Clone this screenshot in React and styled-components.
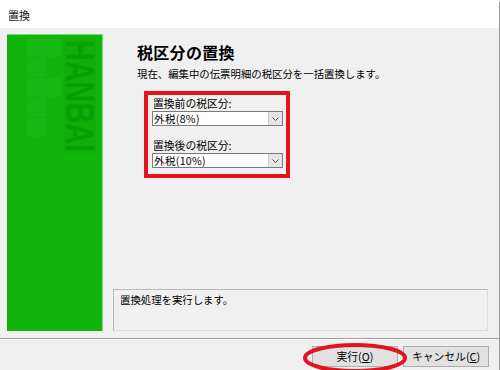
import * as React from "react";
import styled, { createGlobalStyle } from "styled-components";

const GlobalStyle = createGlobalStyle`
  html, body {
    margin: 0;
    padding: 0;
    background: #ffffff;
  }
  body {
    font-family: "Noto Sans CJK JP", "Noto Sans", sans-serif;
    color: #000;
  }
`;

const Window = styled.div`
  position: relative;
  width: 499px;
  height: 368px;
  margin-top: 2px;
  border-right: 1px solid #9a9a9a;
  border-bottom: 1px solid #9a9a9a;
  background: #f0f0f0;
  display: flex;
  flex-direction: column;
  box-sizing: content-box;
`;

const TitleBar = styled.div`
  height: 26px;
  background: #ffffff;
  display: flex;
  align-items: center;
  padding-left: 8px;
  font-size: 11px;
  color: #111;
`;

const Body = styled.div`
  display: flex;
  padding: 6px 11px 0 7px;
  gap: 10px;
  height: 298px;
`;

const SidePanel = styled.div`
  width: 96px;
  height: 297px;
  background: #10b40a;
  border-top: 1px solid #7ad97a;
  border-right: 1px solid #7ad97a;
  box-sizing: border-box;
  padding: 3px 0 0 20px;
  display: flex;
  align-items: flex-start;
  gap: 3px;
`;

const Blocks = styled.div`
  display: flex;
  flex-direction: column;
  gap: 1px;
  width: 34px;
`;

const Block = styled.div`
  width: ${(p) => (p.$wide ? 34 : 20)}px;
  height: 19px;
  border-radius: 2px;
  background: #18b814;
`;

const Wordmark = styled.div`
  width: 32px;
  height: 115px;
  background: #0daf08;
  display: flex;
  justify-content: center;
`;

const WordmarkText = styled.span`
  display: block;
  writing-mode: vertical-rl;
  font-family: "Liberation Sans", Arial, sans-serif;
  font-weight: bold;
  font-size: 40px;
  line-height: 30px;
  color: #07a004;
  transform: scaleY(0.72);
  transform-origin: top;
  margin-top: 2px;
`;

const Content = styled.div`
  flex: 1;
  display: flex;
  flex-direction: column;
`;

const Heading = styled.h1`
  margin: 7px 0 0 24px;
  font-size: 16px;
  font-weight: bold;
  letter-spacing: 0.3px;
  line-height: 22px;
`;

const Lead = styled.p`
  margin: 4px 0 0 24px;
  font-size: 10.4px;
  line-height: 14px;
`;

const Highlight = styled.div`
  margin: 10px 0 0 31px;
  width: 146px;
  height: 87px;
  border: 4px solid #e3141e;
  box-sizing: border-box;
  padding: 2px 4px 0 4px;
  display: flex;
  flex-direction: column;
`;

const Field = styled.div`
  display: flex;
  flex-direction: column;
  gap: 2px;
  margin-top: ${(p) => (p.$first ? "0" : "13px")};
`;

const Label = styled.label`
  font-size: 10.8px;
  line-height: 12px;
  padding-left: 1px;
`;

const Select = styled.div`
  height: 15px;
  width: 131px;
  box-sizing: border-box;
  border: 1px solid #7a7a7a;
  background: #fff;
  display: flex;
  align-items: stretch;
  font-size: 10.6px;
`;

const SelectValue = styled.span`
  flex: 1;
  padding-left: 1px;
  line-height: 13px;
  letter-spacing: 0.3px;
`;

const Arrow = styled.span`
  width: 13px;
  background: #e5e5e5;
  border-left: 1px solid #c8c8c8;
  display: flex;
  align-items: center;
  justify-content: center;
`;

const MessageBox = styled.div`
  margin-top: auto;
  margin-bottom: 1px;
  height: 42px;
  border: 1px solid #b9b9b9;
  border-right-color: #dcdcdc;
  border-bottom-color: #dcdcdc;
  box-sizing: border-box;
  padding: 3px 6px;
  font-size: 10.4px;
  line-height: 14px;
`;

const Separator = styled.div`
  margin-top: 6px;
  border-top: 1px solid #a0a0a0;
  border-bottom: 1px solid #ffffff;
`;

const Footer = styled.div`
  display: flex;
  justify-content: flex-end;
  gap: 5px;
  padding: 6px 10px 0 0;
`;

const Button = styled.button`
  width: ${(p) => p.$w}px;
  height: 21px;
  font-family: inherit;
  font-size: 10.8px;
  background: #e1e1e1;
  border: 1px solid #adadad;
  padding: 0;
  color: #000;
  line-height: 19px;

  u {
    text-decoration: underline;
  }
`;

const Ellipse = styled.svg`
  position: absolute;
  left: 302px;
  top: 340px;
  pointer-events: none;
`;

const Chevron = () => (
  <svg width="7" height="4" viewBox="0 0 7 4">
    <path d="M0.5 0.5 L3.5 3.5 L6.5 0.5" fill="none" stroke="#555" strokeWidth="1" />
  </svg>
);

const App = () => {
  return (
    <>
      <GlobalStyle />
      <Window>
        <TitleBar>置換</TitleBar>
        <Body>
          <SidePanel>
            <Blocks>
              <Block $wide />
              <Block />
              <Block $wide />
              <Block />
              <Block />
            </Blocks>
            <Wordmark>
              <WordmarkText>HANBAI</WordmarkText>
            </Wordmark>
          </SidePanel>
          <Content>
            <Heading>税区分の置換</Heading>
            <Lead>現在、編集中の伝票明細の税区分を一括置換します。</Lead>
            <Highlight>
              <Field $first>
                <Label>置換前の税区分:</Label>
                <Select>
                  <SelectValue>外税(8%)</SelectValue>
                  <Arrow>
                    <Chevron />
                  </Arrow>
                </Select>
              </Field>
              <Field>
                <Label>置換後の税区分:</Label>
                <Select>
                  <SelectValue>外税(10%)</SelectValue>
                  <Arrow>
                    <Chevron />
                  </Arrow>
                </Select>
              </Field>
            </Highlight>
            <MessageBox>置換処理を実行します。</MessageBox>
          </Content>
        </Body>
        <Separator />
        <Footer>
          <Button $w={86}>
            実行(<u>O</u>)
          </Button>
          <Button $w={86}>
            キャンセル(<u>C</u>)
          </Button>
        </Footer>
        <Ellipse width="106" height="32" viewBox="0 0 106 32">
          <ellipse cx="53" cy="16" rx="50" ry="13" fill="none" stroke="#e3141e" strokeWidth="4" />
        </Ellipse>
      </Window>
    </>
  );
};

export default App;
